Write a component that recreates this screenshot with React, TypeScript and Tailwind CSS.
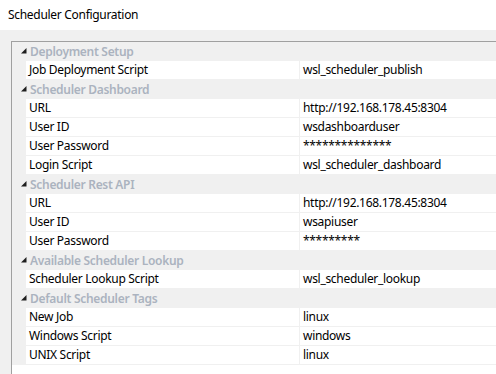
import React from "react";

type Row = { name: string; value: string };
type Section = { title: string; rows: Row[] };

const sections: Section[] = [
  {
    title: "Deployment Setup",
    rows: [{ name: "Job Deployment Script", value: "wsl_scheduler_publish" }],
  },
  {
    title: "Scheduler Dashboard",
    rows: [
      { name: "URL", value: "http://192.168.178.45:8304" },
      { name: "User ID", value: "wsdashboarduser" },
      { name: "User Password", value: "**************" },
      { name: "Login Script", value: "wsl_scheduler_dashboard" },
    ],
  },
  {
    title: "Scheduler Rest API",
    rows: [
      { name: "URL", value: "http://192.168.178.45:8304" },
      { name: "User ID", value: "wsapiuser" },
      { name: "User Password", value: "*********" },
    ],
  },
  {
    title: "Available Scheduler Lookup",
    rows: [{ name: "Scheduler Lookup Script", value: "wsl_scheduler_lookup" }],
  },
  {
    title: "Default Scheduler Tags",
    rows: [
      { name: "New Job", value: "linux" },
      { name: "Windows Script", value: "windows" },
      { name: "UNIX Script", value: "linux" },
    ],
  },
];

const Expander = () => (
  <svg width="6" height="6" viewBox="0 0 6 6" className="block">
    <polygon points="5.5,0 5.5,5.5 0,5.5" fill="#1e1e1e" />
  </svg>
);

const App = () => {
  return (
    <div
      className="w-[496px] h-[374px] overflow-hidden bg-[#f0f0f0] text-[12px] tracking-[-0.3px] text-black"
      style={{ fontFamily: '"Noto Sans", "Open Sans", sans-serif' }}
    >
      {/* Title bar */}
      <div className="h-[30px] bg-white flex items-center pl-2 pb-[1px]">
        Scheduler Configuration
      </div>

      {/* Property grid */}
      <div className="pt-[11px] pl-[11px]">
        <div className="h-[333px] border-l border-t border-[#a0a0a0] bg-white flex flex-col">
          {sections.map((section) => (
            <div key={section.title}>
              <div className="h-[19px] bg-[#f0f0f0] flex items-center">
                <div className="w-[18px] flex justify-end pr-[3px] pb-[1px]">
                  <Expander />
                </div>
                <span className="font-semibold text-[#abb3bf]">{section.title}</span>
              </div>
              {section.rows.map((row) => (
                <div key={section.title + row.name} className="h-[19px] flex bg-[#f0f0f0]">
                  <div className="w-[14px]" />
                  <div className="flex-1 flex bg-white border-b border-[#f0f0f0]">
                    <div className="w-[274px] pl-[3px] flex items-center border-r border-[#f0f0f0]">
                      {row.name}
                    </div>
                    <div className="flex-1 pl-[3px] flex items-center">{row.value}</div>
                  </div>
                </div>
              ))}
            </div>
          ))}
        </div>
      </div>
    </div>
  );
};

export default App;
